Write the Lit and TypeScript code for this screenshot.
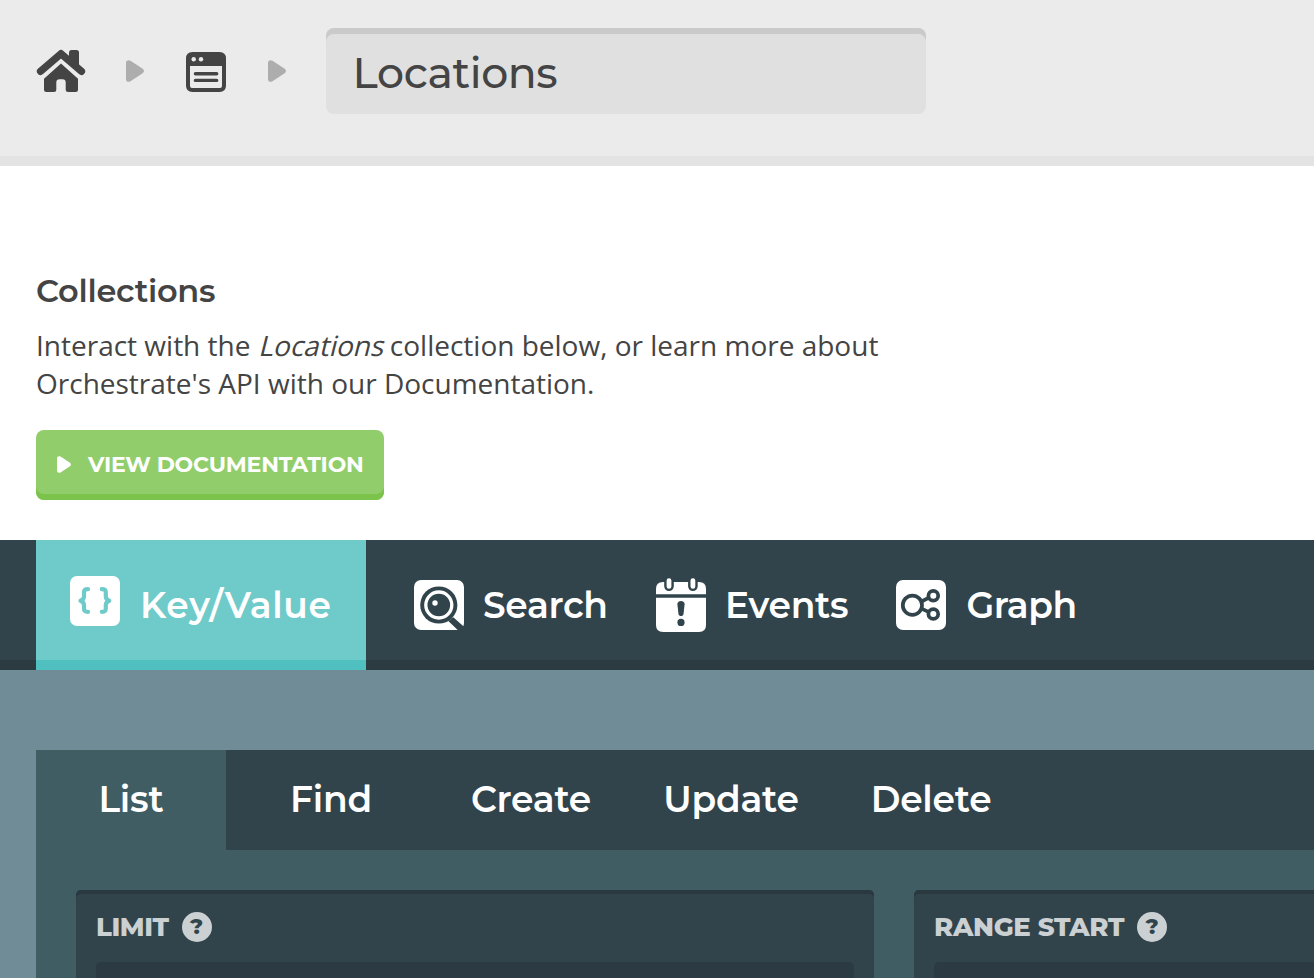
import { LitElement, html, css, svg } from "lit";
import { customElement, state } from "lit/decorators.js";
import { classMap } from "lit/directives/class-map.js";
import { styleMap } from "lit/directives/style-map.js";

const homeIcon = html`<svg class="home" width="50" height="46" viewBox="0 0 50 46">
  <path d="M4.600 23.300 25 5.700l20.400 17.600" fill="none" stroke="#444" stroke-width="7.400" stroke-linecap="round" stroke-linejoin="round" />
  <path d="M33 10V4.500Q33 2 35.500 2h5Q43 2 43 4.500V20z" fill="#444" />
  <path d="M25 15.600 42 30.700V41.500Q42 44 39.500 44h-7.300Q29.700 44 29.700 41.500V34.500Q29.700 31.300 26.500 31.300h-3Q20.300 31.300 20.300 34.500v7Q20.300 44 17.800 44h-7.300Q8 44 8 41.500V30.700z" fill="#444" />
</svg>`;

const listIcon = html`<svg width="40" height="40" viewBox="0 0 40 40">
  <path fill="#444" fill-rule="evenodd" d="M6.500 0h27Q40 0 40 6.500v27Q40 40 33.500 40h-27Q0 40 0 33.500v-27Q0 0 6.500 0zM4 14v20q0 2 2 2h28q2 0 2-2V14z" />
  <circle cx="7.700" cy="7.300" r="2.200" fill="#ebebeb" /><circle cx="15" cy="7.300" r="2.200" fill="#ebebeb" />
  <path d="M9.400 21.700h21.300M9.400 28.400h21.300" stroke="#444" stroke-width="3.400" stroke-linecap="round" />
</svg>`;

const arrow = (cls: string) => html`<svg class=${cls} width="18" height="22" viewBox="0 0 18 22">
  <path fill="currentColor" d="M0 2.800C0 .4 2.400-.4 4.500.8L16.300 8.500Q18 9.700 18 11t-1.700 2.500L4.500 21.200C2.400 22.400 0 21.600 0 19.200z" />
</svg>`;

const keyIcon = svg`<svg width="50" height="50" viewBox="0 0 50 50">
  <rect width="50" height="50" rx="7" fill="#fff" />
  <g fill="none" stroke="#6fcaca" stroke-width="4.200" stroke-linecap="round" stroke-linejoin="round">
    <path d="M18 13.200c-3 0-4 1-4 3.300v4c0 2-1 3.200-3.500 4.200 2.500 1 3.500 2.200 3.500 4.200v3.600c0 2.300 1 3.300 4 3.300" />
    <path d="M31.800 13.200c3 0 4 1 4 3.300v4c0 2 1 3.200 3.500 4.200-2.500 1-3.500 2.200-3.500 4.200v3.600c0 2.300-1 3.300-4 3.300" />
  </g>
</svg>`;

const searchIcon = svg`<svg width="50" height="50" viewBox="0 0 50 50">
  <rect width="50" height="50" rx="7" fill="#fff" />
  <path d="M34.300 41 43.700 50H50V46.700L39.300 37.300z" fill="#32444b" />
  <circle cx="24.800" cy="25" r="18.600" fill="#32444b" />
  <circle cx="24.800" cy="25" r="13" fill="none" stroke="#fff" stroke-width="3.300" />
  <circle cx="21" cy="23" r="2.700" fill="#fff" />
</svg>`;

const eventsIcon = svg`<svg width="50" height="54" viewBox="0 0 50 54">
  <path d="M0 16.300V11Q0 4 7 4h36q7 0 7 7v5.300zM0 19.700h50V47q0 7-7 7H7q-7 0-7-7z" fill="#fff" />
  <g stroke-linecap="round">
    <path d="M13 2.700V8.300M36.900 2.700V8.300" stroke="#32444b" stroke-width="9.600" />
    <path d="M13 2.600V8.400M36.900 2.600V8.400" stroke="#fff" stroke-width="4.800" />
  </g>
  <path d="M21.400 26.200c0-4.300 7.200-4.300 7.200 0L27.500 36.200c-.3 2.400-4.700 2.400-5 0z" fill="#32444b" />
  <circle cx="25" cy="44.400" r="3.600" fill="#32444b" />
</svg>`;

const graphIcon = svg`<svg width="50" height="50" viewBox="0 0 50 50">
  <rect width="50" height="50" rx="7" fill="#fff" />
  <g fill="none" stroke="#32444b" stroke-width="3.700">
    <circle cx="16.400" cy="25.200" r="9.600" />
    <circle cx="37.300" cy="15.700" r="4.900" />
    <circle cx="37.300" cy="34" r="4.900" />
    <path d="M25.500 21.500 33 17.700M25.500 28.600 33 32.200" />
  </g>
</svg>`;

const TABS = [
  { id: "kv", label: "Key/Value", icon: keyIcon },
  { id: "search", label: "Search", icon: searchIcon },
  { id: "events", label: "Events", icon: eventsIcon },
  { id: "graph", label: "Graph", icon: graphIcon },
];

const ACTIONS = ["List", "Find", "Create", "Update", "Delete"];

const FIELDS = [
  { label: "Limit", tracking: -0.45 },
  { label: "Range Start", tracking: -0.33 },
];

@customElement("app-root")
class AppRoot extends LitElement {
  @state() private tab = "kv";
  @state() private action = "List";

  static styles = css`
    :host {
      display: block;
      height: 978px;
      overflow: hidden;
      background: #fff;
      color: #444;
      font-family: Montserrat, Inter, sans-serif;
    }
    * { box-sizing: border-box; }
    svg { display: block; flex: none; }
    h1, h2, p { margin: 0; }
    .crumbs {
      display: flex;
      align-items: flex-start;
      height: 166px;
      padding: 28px 0 0 36px;
      background: #ebebeb;
      border-bottom: 10px solid #e3e3e3;
    }
    .crumbs svg { margin-top: 24px; }
    .crumbs .home { margin-top: 20px; }
    .crumbs .sep { margin: 32px 42px 0 40px; color: #adadad; }
    .crumbs .sep.last { margin: 32px 40px 0 42px; }
    .name {
      width: 600px;
      height: 86px;
      padding-left: 26.5px;
      border-radius: 8px;
      background: #e0e0e0;
      box-shadow: inset 0 6px #cacaca;
      font-size: 42.5px;
      font-weight: 550;
      line-height: 90px;
      letter-spacing: -0.4px;
    }
    .intro { height: 374px; padding: 106px 36px 0; }
    h2 { font-size: 32px; font-weight: 600; line-height: 38px; letter-spacing: -0.26px; }
    .intro p { margin: 16px 0 28px; font: 28px/38px "Open Sans", sans-serif; }
    .intro em {
      display: inline-block;
      font-style: normal;
      transform: skewX(-14deg);
      transform-origin: 0 30px;
    }
    .button {
      display: flex;
      align-items: center;
      gap: 17px;
      width: 348px;
      height: 70px;
      padding-left: 21px;
      border-radius: 8px;
      background: #91ce6b;
      box-shadow: inset 0 -6px #7bc34a;
      color: #fff;
      font-size: 22px;
      font-weight: 700;
      line-height: 68px;
      letter-spacing: -0.2px;
      text-transform: uppercase;
      white-space: nowrap;
    }
    .button svg { width: 14px; height: 17px; margin-bottom: 2px; }
    .tabs {
      display: flex;
      height: 130px;
      padding-left: 36px;
      background: #32444b;
      box-shadow: inset 0 -10px #2c3b42;
      color: #fff;
      font-size: 36px;
      font-weight: 600;
      line-height: 130px;
      letter-spacing: -0.3px;
    }
    .tab { display: flex; gap: 19px; white-space: nowrap; }
    .tab svg { margin-top: 40px; }
    .tab.active { background: #6fcaca; box-shadow: inset 0 -10px #4fbfbf; }
    .tab.kv { gap: 20px; width: 330px; padding-left: 34px; margin-right: 48px; letter-spacing: 0.7px; }
    .tab.kv svg { margin-top: 36px; }
    .tab.search { width: 242px; }
    .tab.events { width: 240px; }
    .tab.events svg { margin-top: 38px; }
    .tab.graph { gap: 20.5px; letter-spacing: -0.5px; }
    .stage { height: 308px; padding: 80px 0 0 36px; background: #6f8c97; }
    .panel { height: 228px; background: #405d64; }
    .actions {
      display: flex;
      gap: 10px;
      height: 100px;
      background: #32444b;
      color: #fff;
      font-size: 36px;
      font-weight: 600;
      line-height: 98px;
      letter-spacing: -0.2px;
      text-align: center;
    }
    .action { width: 190px; height: 100px; }
    .action.active { background: #405d64; }
    .fields { display: flex; gap: 40px; padding: 40px 0 0 40px; }
    .field {
      flex: none;
      width: 798px;
      height: 88px;
      padding: 0 20px;
      overflow: hidden;
      border-radius: 5px 5px 0 0;
      background: #32444b;
      box-shadow: inset 0 4px #2a3940;
    }
    .label {
      display: flex;
      align-items: center;
      gap: 13px;
      height: 72px;
      padding-top: 2px;
      color: #cbd0d2;
      font-size: 26px;
      font-weight: 800;
      line-height: 71px;
      text-transform: uppercase;
    }
    .help {
      width: 30px;
      height: 30px;
      border-radius: 50%;
      background: #cbd0d2;
      color: #32444b;
      font-size: 22px;
      font-weight: 800;
      line-height: 30px;
      text-align: center;
    }
    .input { height: 40px; border-radius: 5px; background: #2c3b43; }
  `;

  render() {
    return html`
      <nav class="crumbs">
        ${homeIcon}${arrow("sep")}${listIcon}${arrow("sep last")}
        <h1 class="name">Locations</h1>
      </nav>
      <section class="intro">
        <h2>Collections</h2>
        <p>Interact with the <em>Locations</em> collection below, or learn more about<br />Orchestrate's API with our Documentation.</p>
        <a class="button">${arrow("play")}<span>View Documentation</span></a>
      </section>
      <nav class="tabs">
        ${TABS.map((t) => html`<div class=${classMap({ tab: true, [t.id]: true, active: t.id === this.tab })} @click=${() => (this.tab = t.id)}>
          ${t.icon}<span>${t.label}</span>
        </div>`)}
      </nav>
      <section class="stage">
        <div class="panel">
          <div class="actions">
            ${ACTIONS.map((a) => html`<div class=${classMap({ action: true, active: a === this.action })} @click=${() => (this.action = a)}>${a}</div>`)}
          </div>
          <div class="fields">
            ${FIELDS.map((f) => html`<div class="field">
              <div class="label"><span style=${styleMap({ letterSpacing: `${f.tracking}px` })}>${f.label}</span><span class="help">?</span></div>
              <div class="input"></div>
            </div>`)}
          </div>
        </div>
      </section>
    `;
  }
}
